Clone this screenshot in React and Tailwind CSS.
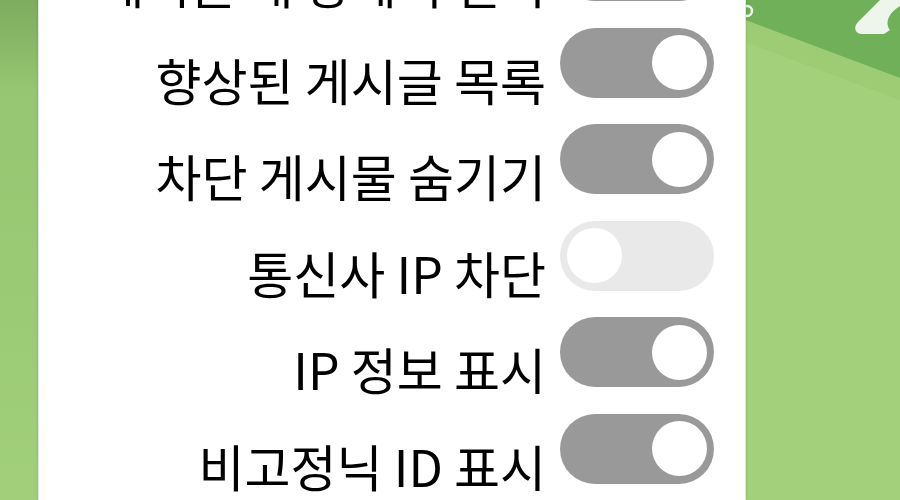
import { useState } from 'react'

const options = [
  { id: 'newTab', label: '게시글 새 창에서 열기', on: true },
  { id: 'enhancedList', label: '향상된 게시글 목록', on: true },
  { id: 'hideBlocked', label: '차단 게시물 숨기기', on: true },
  { id: 'blockCarrier', label: '통신사 IP 차단', on: false },
  { id: 'showIp', label: 'IP 정보 표시', on: true },
  { id: 'showGuestId', label: '비고정닉 ID 표시', on: true }
]

function Toggle({ checked, onChange }) {
  return (
    <button
      type="button"
      onClick={onChange}
      className={`relative h-[70px] w-[154px] shrink-0 rounded-full transition-colors ${checked ? 'bg-[#999999]' : 'bg-[#e9e9e9]'}`}
    >
      <span
        className={`absolute top-[7.5px] h-[55px] w-[55px] rounded-full bg-white transition-all ${checked ? 'left-[92px]' : 'left-[7px]'}`}
      />
    </button>
  )
}

function Backdrop() {
  return (
    <svg className="absolute inset-0" width="900" height="500" viewBox="0 0 900 500">
      <defs>
        <linearGradient id="leftShade" x1="0" y1="0" x2="0" y2="1">
          <stop offset="0" stopColor="#7dac5e" />
          <stop offset="0.18" stopColor="#96c671" />
          <stop offset="1" stopColor="#a1cf7a" />
        </linearGradient>
      </defs>
      <rect width="900" height="500" fill="#a2d07b" />
      <rect width="60" height="500" fill="url(#leftShade)" />
      <polygon points="740,0 900,0 900,78 740,18" fill="#6fb058" />
      <polygon points="740,18 900,78 900,100 740,40" fill="#98c76f" opacity="0.5" />
      <path d="M862 34 C855 34 853 27 858 22 L880 0 L900 0 L900 6 C890 12 884 22 890 30 L884 34 Z" fill="#eef5ea" />
      <circle cx="747" cy="11" r="5" fill="none" stroke="#f2f7ef" strokeWidth="2.5" />
    </svg>
  )
}

export default function App() {
  const [state, setState] = useState(() => Object.fromEntries(options.map((o) => [o.id, o.on])))

  return (
    <div className="relative h-[500px] w-[900px] overflow-hidden" style={{ fontFamily: '"Noto Sans CJK KR", "Noto Sans", sans-serif' }}>
      <Backdrop />
      <div className="relative ml-[38px] flex h-full w-[708px] flex-col border-x border-[#dde5ea] bg-white shadow-[0_0_3px_rgba(0,0,0,0.15)]">
        <div className="-mt-[82px] flex flex-col pr-[31px]">
          {options.map((opt) => (
            <div key={opt.id} className="flex h-[96.5px] items-center justify-end gap-[14px]">
              <span className="mt-[32px] text-[50px] leading-none text-black">{opt.label}</span>
              <Toggle checked={state[opt.id]} onChange={() => setState((s) => ({ ...s, [opt.id]: !s[opt.id] }))} />
            </div>
          ))}
        </div>
      </div>
    </div>
  )
}
